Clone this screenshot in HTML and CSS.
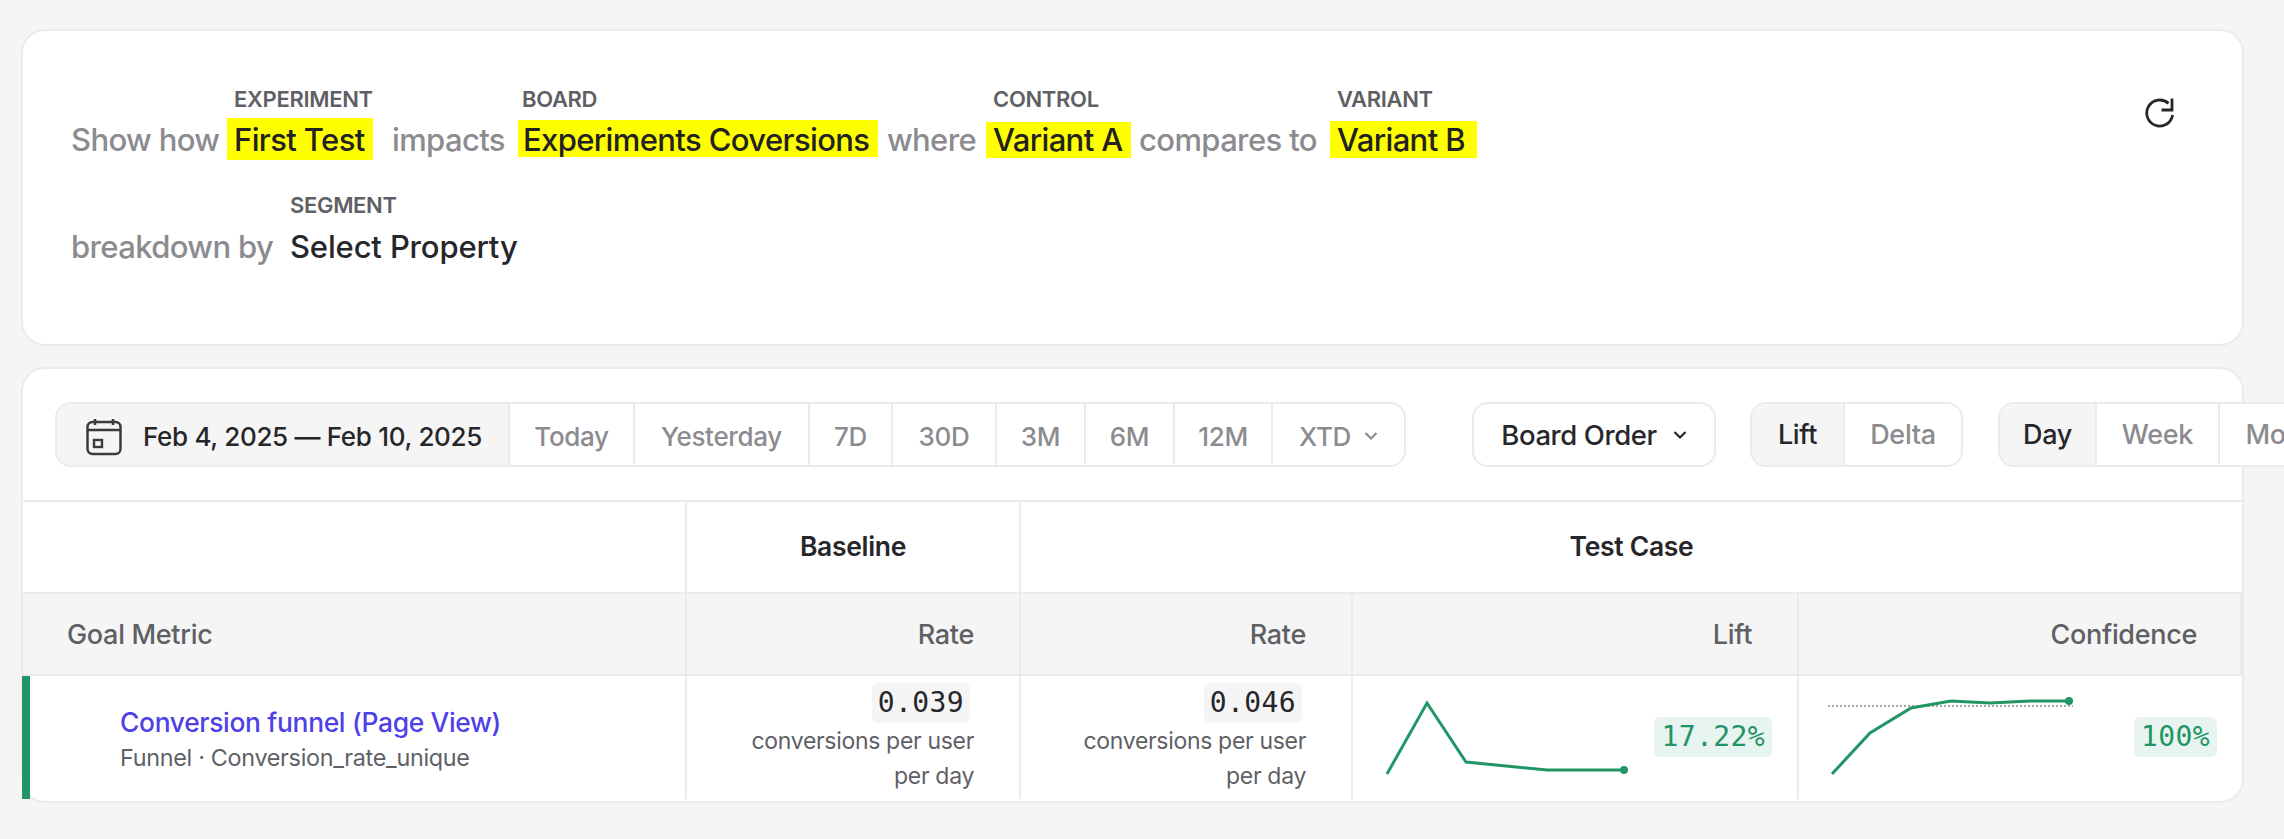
FILE: index.html
```html
<!DOCTYPE html>
<html lang="en">
<head>
<meta charset="utf-8">
<title>Experiment report</title>
<link rel="stylesheet" href="styles.css">
</head>
<body>
<section class="card query">
  <div class="sentence">
    <div class="line">
      <span class="word w-show">Show how</span>
      <div class="slot s-exp"><span class="label">EXPERIMENT</span><span class="value hl hl-first">First Test</span></div>
      <span class="word w-imp">impacts</span>
      <div class="slot s-board"><span class="label label-board">BOARD</span><span class="value hl hl-board">Experiments Coversions</span></div>
      <span class="word w-where">where</span>
      <div class="slot s-ctrl"><span class="label">CONTROL</span><span class="value hl hl-a">Variant A</span></div>
      <span class="word w-comp">compares to</span>
      <div class="slot s-var"><span class="label">VARIANT</span><span class="value hl hl-b">Variant B</span></div>
    </div>
    <div class="line line-2">
      <span class="word w-break">breakdown by</span>
      <div class="slot"><span class="label label-plain">SEGMENT</span><span class="value plain">Select Property</span></div>
    </div>
  </div>
  <svg class="refresh" viewBox="0 0 32 32" width="32" height="32" fill="none" stroke="#26262b" stroke-width="2.8">
    <path d="M28.6 18A13 13 0 1 1 24.5 6.4"/>
    <path d="M28 1.5V13H17.5"/>
  </svg>
</section>

<section class="card report">
  <div class="toolbar">
    <div class="group g-range">
      <div class="cell active date">
        <svg class="cal" viewBox="0 0 36 38" width="36" height="38" fill="none" stroke="#3a3a40" stroke-width="2.5">
          <rect x="1.5" y="4" width="33" height="32" rx="5"/>
          <path d="M1.5 12H34.5M9 1V7M27 1V7"/>
          <rect x="8" y="22" width="8" height="7" stroke-width="2.4"/>
        </svg>
        <span>Feb 4, 2025 — Feb 10, 2025</span>
      </div>
      <div class="cell c-today">Today</div>
      <div class="cell c-yest">Yesterday</div>
      <div class="cell c-7d">7D</div>
      <div class="cell c-30d">30D</div>
      <div class="cell c-3m">3M</div>
      <div class="cell c-6m">6M</div>
      <div class="cell c-12m">12M</div>
      <div class="cell c-xtd">XTD
        <svg class="chev" viewBox="0 0 14 10" width="14" height="10" fill="none" stroke="#8b8b90" stroke-width="2.2"><path d="M1.5 2L7 7.5 12.5 2"/></svg>
      </div>
    </div>
    <div class="group g-order">
      <div class="cell order">Board Order
        <svg class="chev" viewBox="0 0 14 10" width="14" height="10" fill="none" stroke="#26262b" stroke-width="2.2"><path d="M1.5 2L7 7.5 12.5 2"/></svg>
      </div>
    </div>
    <div class="group g-mode">
      <div class="cell active c-lift">Lift</div>
      <div class="cell c-delta">Delta</div>
    </div>
    <div class="group g-time">
      <div class="cell active c-day">Day</div>
      <div class="cell c-week">Week</div>
      <div class="cell c-month">Month</div>
    </div>
  </div>

  <div class="table">
    <div class="th top"></div>
    <div class="th top center">Baseline</div>
    <div class="th top center span3">Test Case</div>

    <div class="th sub left">Goal Metric</div>
    <div class="th sub">Rate</div>
    <div class="th sub">Rate</div>
    <div class="th sub">Lift</div>
    <div class="th sub sub-conf">Confidence</div>

    <div class="td metric">
      <a class="metric-name">Conversion funnel (Page View)</a>
      <span class="metric-sub">Funnel · Conversion_rate_unique</span>
    </div>
    <div class="td num">
      <span class="chip">0.039</span>
      <span class="unit">conversions per user<br>per day</span>
    </div>
    <div class="td num">
      <span class="chip">0.046</span>
      <span class="unit">conversions per user<br>per day</span>
    </div>
    <div class="td chart chart-lift">
      <svg viewBox="0 0 250 90" width="250" height="90" fill="none">
        <polyline points="3,83 43,12 82,71 122,75 163,79 201,79 240,79" stroke="#219565" stroke-width="3"/>
        <circle cx="240" cy="79" r="4" fill="#219565"/>
      </svg>
      <span class="chip good">17.22%</span>
    </div>
    <div class="td chart chart-conf">
      <svg viewBox="0 0 250 90" width="250" height="90" fill="none">
        <line x1="0" y1="15" x2="245" y2="15" stroke="#a8a8a8" stroke-width="2" stroke-dasharray="2 2"/>
        <polyline points="4,83 42,42 83,17 123,10 162,12 202,10 241,10" stroke="#219565" stroke-width="3"/>
        <circle cx="241" cy="10" r="4" fill="#219565"/>
      </svg>
      <span class="chip good">100%</span>
    </div>
  </div>
</section>
</body>
</html>
```
FILE: styles.css
```css
* { box-sizing: border-box; }
html, body { overflow: hidden; }
html { height: 100%; }
body {
  margin: 0;
  padding: 29px 40px 0 21px;
  width: 2284px;
  height: 839px;
  background: #f5f5f5;
  font-family: "Inter", "Liberation Sans", sans-serif;
  font-weight: 500;
  letter-spacing: -0.02em;
  color: #26262b;
}
.card {
  width: 2223px;
  background: #fff;
  border: 2px solid #ebebeb;
  border-radius: 24px;
}
.query {
  height: 317px;
  margin-bottom: 21px;
  display: flex;
  justify-content: space-between;
  padding: 57px 66px 0 48px;
}
.line { display: flex; align-items: flex-start; height: 71px; }
.line-2 { margin-top: 35px; }
.slot { display: flex; flex-direction: column; flex: none; }
.label {
  font-size: 22px;
  line-height: 22px;
  font-weight: 600;
  color: #5f5f66;
  padding-left: 7px;
}
.label-board { padding-left: 4px; }
.label-plain { padding-left: 0; margin-bottom: 13px; }
.value { font-size: 31px; line-height: 36px; letter-spacing: -0.02em; white-space: nowrap; }
.hl { background: #ff0; padding-left: 7px; color: #222; }
.hl-first { margin-top: 8px; padding-top: 4px; padding-bottom: 2px; }
.hl-board { margin-top: 10px; padding-top: 2px; padding-left: 5px; line-height: 35px; }
.hl-a { margin-top: 12px; line-height: 36px; }
.hl-b { margin-top: 11px; padding-top: 1px; }
.plain { letter-spacing: -0.005em; }
.s-exp { width: 146px; }
.s-board { width: 360px; }
.s-ctrl { width: 145px; }
.s-var { width: 147px; }
.word {
  flex: none;
  font-size: 31px;
  line-height: 36px;
  letter-spacing: -0.02em;
  color: #8b8b90;
  white-space: nowrap;
  margin-top: 34px;
}
.line-2 .word { margin-top: 35px; }
.w-show { width: 156px; }
.w-imp { margin-left: 19px; width: 126px; }
.w-where { margin-left: 9px; width: 99px; }
.w-comp { margin-left: 8px; width: 191px; }
.w-break { width: 219px; }
.refresh { margin-top: 9px; flex: none; }

.report { height: 436px; }
.toolbar {
  display: flex;
  height: 133px;
  padding: 33px 0 33px 32px;
  border-bottom: 2px solid #ebebeb;
  white-space: nowrap;
}
.group {
  display: flex;
  flex: none;
  height: 65px;
  background: #fff;
  border: 2px solid #ebebeb;
  border-radius: 16px;
  overflow: hidden;
}
.g-order { margin-left: 66px; }
.g-mode { margin-left: 34px; }
.g-time { margin-left: 35px; }
.cell {
  display: flex;
  align-items: center;
  justify-content: center;
  font-size: 26px;
  color: #8b8b90;
  border-right: 2px solid #ebebeb;
  padding-top: 3px;
}
.cell:last-child { border-right: 0; }
.active { background: #f5f5f5; color: #26262b; }
.date { width: 453px; justify-content: flex-start; padding-left: 29px; gap: 21px; color: #26262b; letter-spacing: -0.012em; }
.cal { margin-top: 2px; flex: none; }
.c-today { width: 125px; }
.c-yest { width: 175px; }
.c-7d { width: 83px; }
.c-30d { width: 104px; }
.c-3m, .c-6m { width: 89px; }
.c-12m { width: 98px; }
.c-xtd { width: 131px; gap: 13px; }
.order { width: 240px; font-size: 27.5px; letter-spacing: -0.015em; color: #26262b; gap: 16px; padding-top: 0; }
.c-lift { width: 93px; font-size: 27px; padding-top: 0; }
.c-delta { width: 116px; font-size: 27px; padding-top: 0; }
.c-day { width: 97px; font-size: 27px; padding-top: 0; }
.c-week { width: 123px; font-size: 27px; padding-top: 0; }
.c-month { width: 132px; font-size: 27px; padding-top: 0; }

.table {
  display: grid;
  grid-template-columns: 664px 334px 332px 446px 443px;
  grid-template-rows: 92px 82px 123px;
}
.th, .td { border-right: 2px solid #ebebeb; }
.th:last-child, .td:last-child { border-right: 0; }
.th { display: flex; align-items: center; justify-content: flex-end; font-size: 27px; }
.top { border-bottom: 2px solid #ebebeb; font-size: 26.5px; font-weight: 600; color: #26262b; padding-bottom: 2px; }
.center { justify-content: center; }
.span3 { grid-column: span 3; border-right: 0; }
.sub {
  background: #f5f5f5;
  color: #5f5f66;
  padding: 1px 45px 0 0;
  border-bottom: 2px solid #ebebeb;
}
.sub-conf { padding-right: 43px; }
.left { justify-content: flex-start; padding-left: 44px; }
.metric {
  display: flex;
  flex-direction: column;
  justify-content: center;
  margin-left: -1px;
  padding: 5px 0 0 90px;
  border-left: 8px solid #219565;
}
.metric-name { font-size: 26.4px; line-height: 36px; color: #4f3fe6; }
.metric-sub { font-size: 23.4px; line-height: 36px; color: #5f5f66; font-weight: 400; }
.num {
  display: flex;
  flex-direction: column;
  align-items: flex-end;
  padding: 7px 45px 0 0;
}
.chip {
  display: block;
  font-family: "DejaVu Sans Mono", "Liberation Mono", monospace;
  font-size: 28px;
  line-height: 40px;
  letter-spacing: 0.4px;
  font-weight: 400;
  padding: 0 6px;
  border-radius: 6px;
  background: #f5f5f5;
  color: #26262b;
  margin-right: 4px;
}
.unit {
  font-size: 23px;
  line-height: 35px;
  text-align: right;
  font-weight: 400;
  color: #5f5f66;
  margin-top: 1px;
}
.chart { display: flex; justify-content: space-between; align-items: flex-start; }
.chart svg { flex: none; margin-top: 15px; margin-left: 31px; }
.chart .chip { margin: 41px 25px 0 0; background: #e8f4ef; color: #219565; padding: 0 7px; }
.chart-conf svg { margin-left: 29px; }
```
